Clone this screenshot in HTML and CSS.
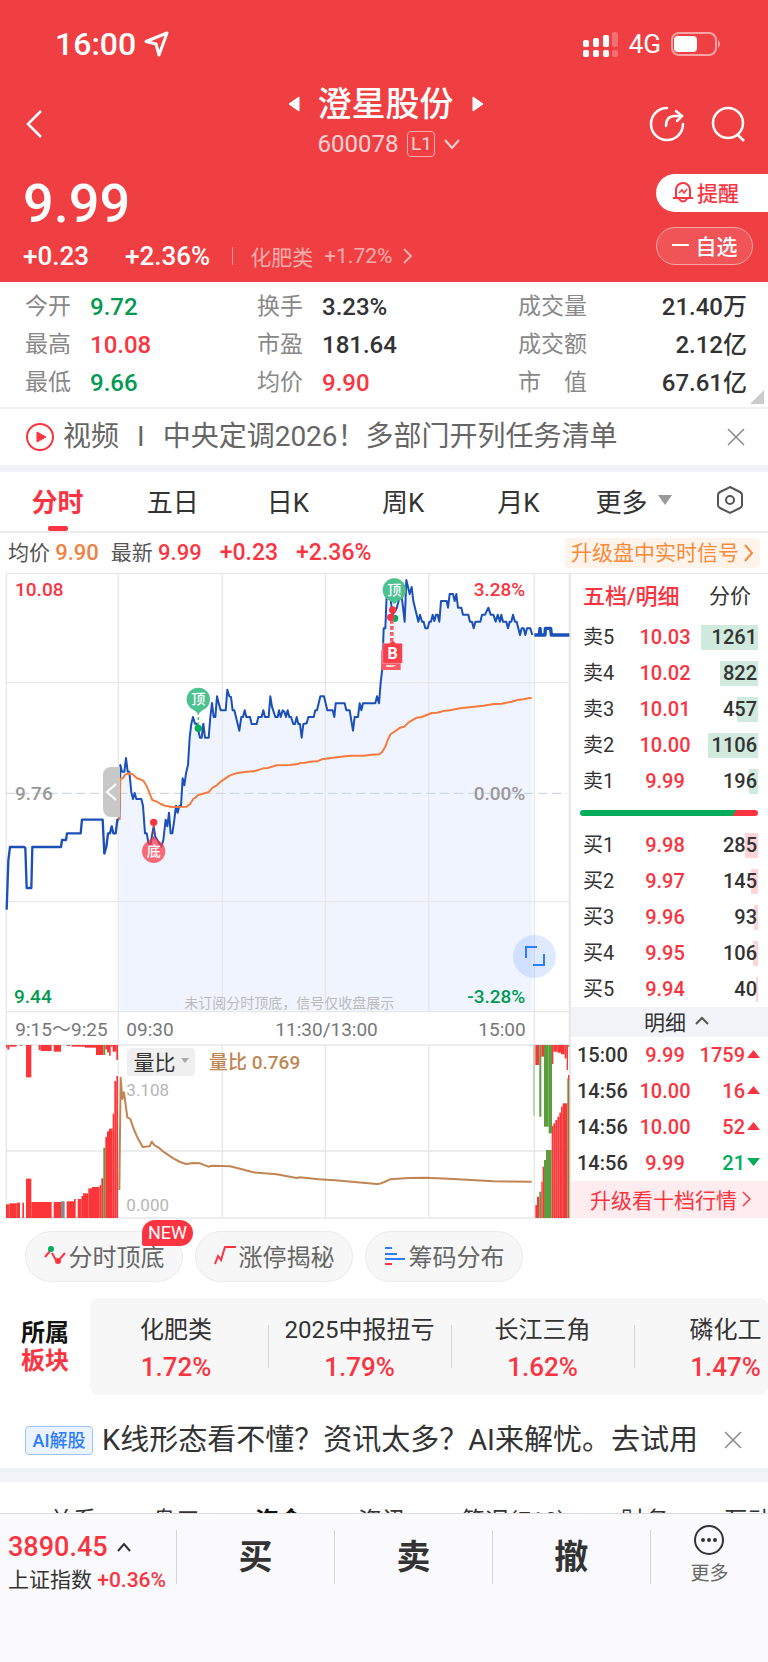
FILE: index.html
```html
<!DOCTYPE html>
<html lang="zh-CN">
<head>
    <meta charset="utf-8">
    <meta name="viewport" content="width=device-width, initial-scale=1">
    <title>澄星股份 600078</title>
    <link rel="stylesheet" href="styles.css">
</head>
<body>
    <header class="header">
        <div class="status">
            <span class="clock">16:00</span>
            <svg class="location" width="26" height="36" viewBox="0 0 26 36"><path d="M23 7L2 15.500l10 2.500 3 11z" fill="none" stroke="#fff" stroke-width="3" stroke-linejoin="round"/></svg>
            <svg class="signal" width="36" height="38" viewBox="0 0 36 38" fill="#fff">
                <rect x="0" y="15" width="6" height="7" rx="2"/><rect x="10" y="13" width="6" height="9" rx="2"/><rect x="20" y="10" width="6" height="12" rx="2"/><rect x="29" y="7" width="6" height="15" rx="2" opacity=".25"/>
                <rect x="0" y="25" width="6" height="7" rx="2"/><rect x="10" y="25" width="6" height="7" rx="2"/><rect x="20" y="25" width="6" height="7" rx="2"/><rect x="29" y="25" width="6" height="7" rx="2" opacity=".25"/>
            </svg>
            <span class="network">4G</span>
            <svg class="battery" width="50" height="24" viewBox="0 0 50 24"><rect x="1" y="1" width="44" height="22" rx="7" fill="none" stroke="#f9a5a6" stroke-width="2"/><rect x="3" y="4" width="23" height="16" rx="4" fill="#fff"/><path d="M47 8q4 4 0 8z" fill="#f9a5a6"/></svg>
        </div>

        <nav class="nav">
            <button class="icon-btn back" aria-label="返回"><svg width="20" height="30" viewBox="0 0 20 30"><path d="M16 2L3 15l13 13" fill="none" stroke="#fff" stroke-width="2.500"/></svg></button>
            <div class="stock">
                <div class="stock-name">
                    <button class="icon-btn" aria-label="上一只"><svg width="12" height="16" viewBox="0 0 12 16"><path d="M11 1v14L1 8z" fill="#fff" stroke="#fff" stroke-linejoin="round"/></svg></button>
                    <h1>澄星股份</h1>
                    <button class="icon-btn" aria-label="下一只"><svg width="12" height="16" viewBox="0 0 12 16"><path d="M1 1v14l10-7z" fill="#fff" stroke="#fff" stroke-linejoin="round"/></svg></button>
                </div>
                <div class="stock-code">
                    <span>600078</span>
                    <span class="level">L1</span>
                    <svg width="16" height="12" viewBox="0 0 16 12"><path d="M1 2l7 8 7-8" fill="none" stroke="#fcd3d3" stroke-width="2"/></svg>
                </div>
            </div>
            <div class="nav-actions">
                <button class="icon-btn" aria-label="分享"><svg width="36" height="36" viewBox="0 0 36 36" fill="none" stroke="#fff" stroke-width="2.500" stroke-linecap="round"><path d="M18 2a16 16 0 1 0 16 16"/><path d="M17 20c0-6 2-10 9-10h5"/><path d="M27 5l6 5-5 5"/></svg></button>
                <button class="icon-btn" aria-label="搜索"><svg width="36" height="36" viewBox="0 0 36 36" fill="none" stroke="#fff" stroke-width="2.500"><circle cx="18" cy="17" r="15"/><path d="M27 28l7 7"/></svg></button>
            </div>
        </nav>

        <div class="quote">
            <div>
                <div class="price">9.99</div>
                <div class="change">
                    <b>+0.23</b><b>+2.36%</b>
                    <a class="industry" href="#">化肥类 <span>+1.72%</span>
                        <svg width="10" height="16" viewBox="0 0 10 16"><path d="M1 1l7 7-7 7" fill="none" stroke="#f9adad" stroke-width="2"/></svg>
                    </a>
                </div>
            </div>
            <div class="quote-actions">
                <button class="remind">
                    <svg width="22" height="22" viewBox="0 0 22 22" fill="none" stroke="#fb3441" stroke-width="2"><path d="M4 17V9a7 7 0 0 1 14 0v8M1 17h20M7 18q4 5 8 0"/><path d="M7 12l3-3 2 3 3-4" stroke-width="1.500"/></svg>提醒
                </button>
                <button class="favorite"><i></i>自选</button>
            </div>
        </div>
    </header>

    <section class="stats">
        <dl>
            <dt>今开</dt><dd class="down">9.72</dd>
            <dt>最高</dt><dd class="up">10.08</dd>
            <dt>最低</dt><dd class="down">9.66</dd>
        </dl>
        <dl>
            <dt>换手</dt><dd>3.23%</dd>
            <dt>市盈</dt><dd>181.64</dd>
            <dt>均价</dt><dd class="up">9.90</dd>
        </dl>
        <dl class="wide">
            <dt>成交量</dt><dd>21.40万</dd>
            <dt>成交额</dt><dd>2.12亿</dd>
            <dt>市　值</dt><dd>67.61亿</dd>
        </dl>
        <svg class="corner" width="14" height="14" viewBox="0 0 14 14"><path d="M14 0v14H0z" fill="#ccc"/></svg>
    </section>

    <div class="news">
        <svg width="28" height="28" viewBox="0 0 28 28"><circle cx="14" cy="14" r="13" fill="none" stroke="#fb3441" stroke-width="2"/><path d="M11 9v10l9-5z" fill="#fb3441" stroke="#fb3441" stroke-linejoin="round"/></svg>
        <a href="#">视频<span class="bar">I</span>中央定调2026！多部门开列任务清单</a>
        <button class="icon-btn" aria-label="关闭"><svg width="18" height="18" viewBox="0 0 18 18"><path d="M1 1l16 16M17 1L1 17" stroke="#888" stroke-width="1.500"/></svg></button>
    </div>

    <nav class="tabs">
        <button class="active">分时</button>
        <button>五日</button>
        <button>日K</button>
        <button>周K</button>
        <button>月K</button>
        <button>更多<svg width="14" height="10" viewBox="0 0 14 10"><path d="M0 0h14L7 10z" fill="#999"/></svg></button>
        <button class="settings" aria-label="设置"><svg width="28" height="30" viewBox="0 0 28 30" fill="none" stroke="#555" stroke-width="2"><path d="M14 2l10 5q2 1 2 3v10q0 2-2 3l-10 5-10-5q-2-1-2-3V10q0-2 2-3z"/><circle cx="14" cy="15" r="4"/></svg></button>
    </nav>

    <div class="summary">
        <span>均价 <b class="avg">9.90</b></span>
        <span>最新 <b class="up">9.99</b></span>
        <b class="up">+0.23</b>
        <b class="up">+2.36%</b>
        <a class="signal-link" href="#">升级盘中实时信号<svg width="10" height="18" viewBox="0 0 10 18"><path d="M1 1l7 8-7 8" fill="none" stroke="#f98a3a" stroke-width="2"/></svg></a>
    </div>

    <main class="market">
        <div class="chart">
            <!-- three units to a pixel -->
            <svg viewBox="0 24 1710 1938">
                <path id="area" fill="#eff4ff"/>
                <path class="grid" d="M18 25H1710M18 353H1710M18 1010H1710M18 1340H1710M18 1440H1710M18 1758H1710M18 1959H1710M19 25V1959M355 25V1959M667 25V1340M976 25V1340M1286 25V1340M667 1440V1959M976 1440V1959M1286 1440V1959M1603 25V1959M1708 25V1959"/>
                <path d="M18 685H1700" stroke="#c3d3df" stroke-width="3" stroke-dasharray="28 14"/>
                <g id="bars"></g>
                <polyline id="auction" class="line" stroke="#1a50b8"/>
                <polyline id="price" class="line" stroke="#1a50b8"/>
                <polyline id="after" class="line" stroke="#1a50b8"/>
                <polyline id="average" class="line" stroke="#f77b3c"/>
                <polyline id="ratio" class="line" stroke="#c08552"/>

                <path d="M595 440V480" stroke="#4dc190" stroke-width="5" stroke-dasharray="9 7"/>
                <circle cx="595" cy="490" r="11" fill="#00ad5b"/>
                <path d="M574 428h42l-21 18z" fill="#4dc190"/><circle cx="595" cy="403" r="35" fill="#4dc190"/>
                <text class="mark" x="595" y="418">顶</text>

                <path d="M461 780V825" stroke="#fb3441" stroke-width="4" stroke-dasharray="10 7"/>
                <circle cx="461" cy="772" r="11" fill="#fb3441"/>
                <g fill="#fb3441" opacity=".72"><path d="M461 815l22 17a35 35 0 1 1-44 0z"/></g>
                <text class="mark" x="461" y="873">底</text>

                <circle cx="1184" cy="160" r="11" fill="#00ad5b"/>
                <path d="M1162 99h42l-21 19z" fill="#4dc190"/><circle cx="1183" cy="75" r="35" fill="#4dc190"/>
                <text class="mark" x="1183" y="90">顶</text>
                <path d="M1178 165V232M1173 165V250" stroke="#f4606a" stroke-width="6" stroke-dasharray="11 7"/>
                <circle cx="1172" cy="157" r="11" fill="#fb3441"/><circle cx="1178" cy="135" r="11" fill="#fb3441"/>
                <path d="M1144 255h58v60h-58z" fill="#f95a66"/>
                <path d="M1148 235h20l10-9 10 9h19v60h-59z" fill="#fb3d4a" stroke="#fff" stroke-width="1"/>
                <text class="mark b" x="1178" y="283">B</text>
                <path d="M1158 301h30q-2 4-12 4h-18z" fill="#fff"/>

                <text class="lbl up" x="45" y="94">10.08</text>
                <text class="lbl end up" x="1576" y="94">3.28%</text>
                <text class="lbl gray" x="45" y="705">9.76</text>
                <text class="lbl end gray" x="1576" y="705">0.00%</text>
                <text class="lbl down" x="42" y="1315">9.44</text>
                <text class="lbl end down" x="1576" y="1315">-3.28%</text>
                <text class="tip" x="553" y="1330">未订阅分时顶底，信号仅收盘展示</text>
                <text class="lbl time" x="46" y="1412">9:15～9:25</text>
                <text class="lbl time" x="379" y="1412">09:30</text>
                <text class="lbl time" x="826" y="1412">11:30/13:00</text>
                <text class="lbl end time" x="1577" y="1412">15:00</text>
                <text class="lbl ratio" x="627" y="1512">量比 0.769</text>
                <text class="lbl light" x="379" y="1593">3.108</text>
                <text class="lbl light" x="379" y="1937">0.000</text>
            </svg>
            <button class="handle" aria-label="收起竞价"><svg width="12" height="18" viewBox="0 0 12 18"><path d="M11 1L2 9l9 8" fill="none" stroke="#fff" stroke-width="2"/></svg></button>
            <button class="expand" aria-label="全屏"><svg width="20" height="20" viewBox="0 0 20 20"><path d="M1 12V1h11M19 8v11H8" fill="none" stroke="#2f7dfb" stroke-width="2"/></svg></button>
            <button class="indicator">量比<svg width="8" height="5" viewBox="0 0 8 5"><path d="M0 0h8L4 5z" fill="#aaa"/></svg></button>
        </div>

        <aside class="book">
            <div class="book-tabs">
                <button class="active">五档/明细</button>
                <button>分价</button>
            </div>
            <table class="levels sell">
                <tr><th>卖5</th><td>10.03</td><td style="--bar: 57px">1261</td></tr>
                <tr><th>卖4</th><td>10.02</td><td style="--bar: 38px">822</td></tr>
                <tr><th>卖3</th><td>10.01</td><td style="--bar: 21px">457</td></tr>
                <tr><th>卖2</th><td>10.00</td><td style="--bar: 50px">1106</td></tr>
                <tr><th>卖1</th><td>9.99</td><td style="--bar: 9px">196</td></tr>
            </table>
            <div class="balance"></div>
            <table class="levels buy">
                <tr><th>买1</th><td>9.98</td><td style="--bar: 13px">285</td></tr>
                <tr><th>买2</th><td>9.97</td><td style="--bar: 7px">145</td></tr>
                <tr><th>买3</th><td>9.96</td><td style="--bar: 4px">93</td></tr>
                <tr><th>买4</th><td>9.95</td><td style="--bar: 5px">106</td></tr>
                <tr><th>买5</th><td>9.94</td><td style="--bar: 2px">40</td></tr>
            </table>
            <button class="detail">明细<svg width="14" height="9" viewBox="0 0 14 9"><path d="M1 8l6-6 6 6" fill="none" stroke="#555" stroke-width="2"/></svg></button>
            <table class="trades">
                <tr><th>15:00</th><td>9.99</td><td>1759<svg width="13" height="8" viewBox="0 0 13 8"><path d="M0 8h13L6.500 0z" fill="#fb3441"/></svg></td></tr>
                <tr><th>14:56</th><td>10.00</td><td>16<svg width="13" height="8" viewBox="0 0 13 8"><path d="M0 8h13L6.500 0z" fill="#fb3441"/></svg></td></tr>
                <tr><th>14:56</th><td>10.00</td><td>52<svg width="13" height="8" viewBox="0 0 13 8"><path d="M0 8h13L6.500 0z" fill="#fb3441"/></svg></td></tr>
                <tr><th>14:56</th><td>9.99</td><td class="down">21<svg width="13" height="8" viewBox="0 0 13 8"><path d="M0 0h13L6.500 8z" fill="#00ad5b"/></svg></td></tr>
            </table>
            <a class="upgrade" href="#">升级看十档行情<svg width="9" height="16" viewBox="0 0 9 16"><path d="M1 1l7 7-7 7" fill="none" stroke="#fb3441" stroke-width="1.500"/></svg></a>
        </aside>
    </main>

    <div class="tools">
        <button><svg width="22" height="22" viewBox="0 0 22 22" fill="none" stroke="#fb3441" stroke-width="2"><path d="M1 12l5-6M8 8l5 9M15 15l6-7"/><circle cx="7" cy="4" r="2" fill="#00ad5b" stroke="#00ad5b"/><circle cx="14" cy="16" r="2" fill="#fb3441"/></svg>分时顶底<span class="new">NEW</span></button>
        <button><svg width="22" height="22" viewBox="0 0 22 22"><path d="M1 19l3-8 3 4L11 2h11" fill="none" stroke="#fb3441" stroke-width="2"/></svg>涨停揭秘</button>
        <button><svg width="22" height="22" viewBox="0 0 22 22" stroke-width="2"><path d="M1 3h7M1 9h12M1 14h20" stroke="#2f7dfb"/><path d="M1 19h7" stroke="#fb3441"/></svg>筹码分布</button>
    </div>

    <section class="sectors">
        <h2>所属<br><span class="up">板块</span></h2>
        <div class="sector-list">
            <a href="#">化肥类<b>1.72%</b></a>
            <a href="#">2025中报扭亏<b>1.79%</b></a>
            <a href="#">长江三角<b>1.62%</b></a>
            <a href="#">磷化工<b>1.47%</b></a>
        </div>
    </section>

    <div class="ai">
        <span class="ai-tag">AI解股</span>
        <a href="#">K线形态看不懂？资讯太多？AI来解忧。去试用</a>
        <button class="icon-btn" aria-label="关闭"><svg width="18" height="18" viewBox="0 0 18 18"><path d="M1 1l16 16M17 1L1 17" stroke="#888" stroke-width="1.500"/></svg></button>
    </div>

    <nav class="subtabs">
        <a href="#">关系</a><a href="#">盘口</a><a class="active" href="#">资金</a><a href="#">资讯</a><a href="#">简况(F10)</a><a href="#">财务</a><a href="#">互动</a>
    </nav>

    <footer class="bottom">
        <div class="index">
            <div class="index-value">3890.45<svg width="14" height="10" viewBox="0 0 14 10"><path d="M1 9l6-7 6 7" fill="none" stroke="#333" stroke-width="2"/></svg></div>
            <div class="index-name">上证指数 <b class="up">+0.36%</b></div>
        </div>
        <button>买</button>
        <button>卖</button>
        <button>撤</button>
        <button class="more"><svg width="32" height="32" viewBox="0 0 32 32"><circle cx="16" cy="16" r="14" fill="none" stroke="#333" stroke-width="2"/><g fill="#333"><circle cx="10" cy="16" r="2"/><circle cx="16" cy="16" r="2"/><circle cx="22" cy="16" r="2"/></g></svg>更多</button>
    </footer>

    <script>
        const auction = "20,1034 25,887 30,846 72,846 76,849 80,969 94,969 97,846 183,846 186,825 198,825 201,805 242,805 246,764 308,764 313,866 319,846 324,805 330,805 335,784 340,805 347,805 352,764 357,764";
        const price = "358,764 361,600 366,620 373,620 378,579 383,620 388,620 394,682 399,702 404,684 409,702 424,702 429,722 435,805 440,805 446,836 452,836 457,805 461,784 466,815 472,825 484,845 490,825 497,764 502,784 507,743 512,805 517,805 523,764 528,722 533,743 538,722 543,722 548,640 553,661 558,625 564,600 569,518 574,476 579,456 585,476 590,476 595,497 600,518 605,518 610,476 615,518 626,518 631,456 636,414 641,456 646,456 651,394 656,414 662,436 677,436 682,374 688,394 693,396 698,436 703,436 708,456 718,497 724,456 729,456 734,436 739,456 750,456 755,477 770,477 775,456 785,456 790,436 795,456 806,456 811,394 816,425 826,456 833,456 837,436 842,456 848,436 853,440 858,456 863,436 868,456 873,456 880,477 885,477 890,456 895,477 900,477 905,518 910,477 920,475 925,456 941,456 946,436 951,436 961,394 972,394 982,436 998,436 1003,456 1007,415 1034,415 1039,436 1049,436 1059,497 1064,456 1074,456 1079,415 1084,436 1089,415 1126,415 1131,394 1137,415 1142,353 1147,310 1151,190 1156,190 1161,66 1166,90 1172,100 1177,150 1190,130 1198,100 1202,85 1207,110 1214,170 1219,45 1224,66 1229,87 1235,66 1240,108 1250,149 1255,170 1260,149 1266,170 1271,170 1276,190 1283,190 1288,170 1293,170 1298,149 1303,168 1308,149 1313,149 1318,170 1323,108 1340,108 1344,128 1349,87 1359,87 1364,108 1369,87 1374,128 1384,128 1389,149 1405,149 1410,170 1416,170 1421,190 1426,170 1441,170 1446,149 1455,149 1465,128 1472,149 1480,149 1487,170 1493,149 1500,170 1504,149 1509,170 1519,170 1524,190 1529,170 1534,170 1539,149 1545,170 1550,170 1555,190 1560,210 1565,190 1571,190 1576,210 1581,190 1591,190 1597,210";
        const after = "1603,210 1618,210 1620,190 1622,210 1635,210 1636,190 1652,190 1654,210 1708,210";
        const average = "358,764 361,641 368,640 375,630 384,625 398,628 410,639 430,647 440,663 450,688 457,705 470,710 482,717 495,722 515,726 560,725 570,717 580,702 597,689 625,682 638,668 650,661 662,650 690,631 708,625 740,620 762,619 790,610 803,609 830,601 868,600 895,597 900,594 915,593 930,590 952,589 965,583 1000,578 1035,574 1055,572 1090,572 1115,569 1138,568 1147,560 1157,543 1163,525 1172,507 1182,501 1200,488 1213,485 1225,473 1250,458 1265,456 1295,444 1312,443 1330,438 1350,436 1380,430 1450,422 1482,417 1505,416 1535,410 1552,405 1570,403 1588,399 1595,399";
        const ratio = "358,1875 362,1538 367,1602 372,1582 382,1657 391,1662 400,1689 412,1717 428,1746 449,1744 455,1730 464,1741 475,1747 490,1760 520,1780 540,1791 558,1797 580,1794 600,1795 625,1805 636,1802 690,1804 720,1811 760,1822 830,1828 890,1839 900,1837 955,1843 1005,1846 1130,1857 1140,1856 1153,1851 1170,1843 1225,1839 1280,1838 1360,1842 1480,1849 1595,1850";

        const RED = "#fb3538", GREEN = "#5c9c3c", GRAY = "#888";

        // [left, right, edge, colour]
        const lower = [
            [18, 28, 1918], [28, 50, 1915], [50, 60, 1913], [67, 72, 1913], [78, 94, 1841], [94, 155, 1911],
            [161, 183, 1911], [183, 194, 1909, GRAY], [200, 222, 1909], [222, 227, 1902], [233, 244, 1902],
            [244, 249, 1893], [249, 265, 1885], [265, 276, 1870], [276, 299, 1866], [299, 304, 1860], [304, 310, 1840],
            [310, 316, 1748, GREEN], [316, 321, 1716], [321, 327, 1699], [327, 338, 1691], [338, 343, 1646],
            [343, 349, 1548], [349, 354, 1533],
            [1606, 1611, 1920], [1611, 1618, 1895], [1618, 1624, 1880, GREEN], [1624, 1628, 1850], [1628, 1632, 1805],
            [1632, 1638, 1785, GREEN], [1638, 1655, 1755, GREEN], [1655, 1660, 1683], [1660, 1666, 1675],
            [1666, 1672, 1665], [1672, 1678, 1655], [1678, 1683, 1643], [1683, 1688, 1625], [1688, 1702, 1615],
            [1702, 1704, 1540, GREEN], [1704, 1708, 1530], [1704, 1706, 1545, GREEN]
        ];
        const upper = [
            [18, 22, 1448], [22, 28, 1454], [28, 50, 1445], [61, 66, 1443], [78, 94, 1537], [116, 122, 1455],
            [122, 155, 1458], [161, 183, 1460], [200, 210, 1443], [215, 255, 1445], [255, 288, 1448], [288, 310, 1470],
            [310, 316, 1470, GREEN], [316, 321, 1453], [321, 327, 1462], [327, 332, 1472], [332, 338, 1445],
            [338, 349, 1460], [349, 354, 1485],
            [1600, 1604, 1652, "#a3c795"], [1606, 1618, 1500], [1618, 1624, 1655, GREEN], [1624, 1632, 1475],
            [1632, 1646, 1685, GREEN], [1646, 1656, 1705, GREEN], [1656, 1660, 1497], [1660, 1672, 1460],
            [1672, 1683, 1463], [1683, 1694, 1468], [1694, 1700, 1480], [1700, 1704, 1515], [1704, 1708, 1445, GREEN]
        ];

        const lines = { auction, price, after, average, ratio };
        for (const id in lines) {
            document.getElementById(id).setAttribute("points", lines[id]);
        }
        document.getElementById("area").setAttribute("d", `M358 1340L${price}V1340Z`);

        function bar(left, right, top, bottom, color) {
            return `<rect x="${left}" y="${top}" width="${right - left}" height="${bottom - top}" fill="${color || RED}"/>`;
        }
        document.getElementById("bars").innerHTML =
            lower.map(b => bar(b[0], b[1], b[2], 1959, b[3])).join("") +
            upper.map(b => bar(b[0], b[1], 1440, b[2], b[3])).join("");
    </script>
</body>
</html>
```

FILE: styles.css
```css
* {
    box-sizing: border-box;
}

body {
    margin: 0;
    font-family: Roboto, "Noto Sans CJK SC", sans-serif;
    font-size: 21px;
    color: #333;
    background: #fff;
    overflow-x: hidden;
}

h1, h2, dl, dd {
    margin: 0;
}

button {
    margin: 0;
    padding: 0;
    border: none;
    background: none;
    font: inherit;
    color: inherit;
    cursor: pointer;
}

a {
    color: inherit;
    text-decoration: none;
}

b {
    font-weight: 500;
}

svg {
    display: block;
    flex: none;
}

.up {
    color: #fb3441;
}

.down {
    color: #009a50;
}

.icon-btn {
    flex: none;
}

/* header */
.header {
    height: 282px;
    color: #fff;
    background: #f03f42;
}

.status {
    display: flex;
    align-items: center;
    height: 84px;
    padding: 4px 47px 0 55px;
}

.clock {
    font-size: 32px;
    font-weight: 500;
}

.location {
    margin-left: 8px;
}

.signal {
    margin-left: auto;
}

.network {
    margin: 0 10px;
    font-size: 26px;
}

.nav {
    display: grid;
    grid-template-columns: 1fr auto 1fr;
    align-items: center;
    height: 76px;
    padding: 0 22px 0 25px;
}

.back {
    justify-self: start;
    padding-top: 4px;
}

.stock {
    display: flex;
    flex-direction: column;
    gap: 8px;
    padding-bottom: 2px;
}

.stock-name, .stock-code {
    display: flex;
    align-items: center;
}

.stock-name {
    gap: 18px;
    height: 38px;
}

.stock-name h1 {
    font-size: 34px;
    font-weight: 500;
    line-height: 36px;
}

.stock-code {
    gap: 9px;
    height: 26px;
    padding-left: 30px;
    font-size: 24px;
    color: #fcd3d3;
}

.level {
    width: 28px;
    border: 1px solid #f9adad;
    border-radius: 4px;
    font-size: 19px;
    line-height: 24px;
    text-align: center;
}

.nav-actions {
    display: flex;
    justify-content: flex-end;
    gap: 25px;
    padding-top: 4px;
}

.quote {
    display: flex;
    justify-content: space-between;
    padding-left: 23px;
}

.price {
    height: 82px;
    font-size: 54px;
    font-weight: 500;
    line-height: 88px;
}

.change {
    display: flex;
    align-items: center;
    gap: 36px;
    height: 28px;
    font-size: 26px;
}

.industry {
    display: flex;
    align-items: center;
    gap: 11px;
    margin-left: -14px;
    padding-left: 18px;
    background: linear-gradient(#f78f90, #f78f90) left center / 1px 18px no-repeat;
    font-size: 21px;
    color: #f9adad;
}

.quote-actions {
    display: flex;
    flex-direction: column;
    gap: 15px;
    width: 112px;
    padding-top: 14px;
}

.remind, .favorite {
    display: flex;
    align-items: center;
    justify-content: center;
    height: 38px;
    padding-bottom: 2px;
    border-radius: 19px;
}

.remind {
    gap: 3px;
    padding-right: 13px;
    border-radius: 19px 0 0 19px;
    color: #fb3441;
    background: #fff;
    font-weight: 500;
}

.favorite {
    gap: 7px;
    width: 97px;
    border: 1px solid #f9a5a6;
    background: #f15457;
    font-weight: 500;
}

.favorite i {
    width: 17px;
    height: 2px;
    background: #fff;
}

/* key figures */
.stats {
    position: relative;
    display: grid;
    grid-template-columns: 232fr 261fr 229fr;
    padding: 6px 21px 5px 25px;
    border-bottom: 2px solid #f1f1f3;
}

.stats dl {
    display: grid;
    grid-template-columns: auto 1fr;
    column-gap: 19px;
    line-height: 38px;
}

.stats dt {
    font-size: 23px;
    color: #888;
}

.stats dd {
    font-size: 24px;
    font-weight: 500;
}

.stats .wide dd {
    text-align: right;
}

.corner {
    position: absolute;
    right: 4px;
    bottom: 3px;
}

.news {
    display: flex;
    align-items: center;
    height: 63px;
    padding: 0 23px 0 26px;
    border-bottom: 7px solid #f2f3f8;
    font-size: 28px;
    color: #666;
}

.news a {
    flex: 1;
    margin-left: 9px;
    line-height: 40px;
}

.news .bar {
    margin: 0 18px;
}

/* period tabs */
.tabs {
    display: grid;
    grid-template-columns: repeat(6, 15fr) 10fr;
    height: 61px;
    border-bottom: 2px solid #ececec;
    font-size: 26px;
}

.tabs button {
    position: relative;
    display: flex;
    align-items: center;
    justify-content: center;
    gap: 10px;
    padding-bottom: 3px;
}

.tabs .active {
    color: #fb3441;
    font-weight: 700;
}

.tabs .active::after {
    content: "";
    position: absolute;
    bottom: 0;
    width: 20px;
    height: 5px;
    border-radius: 2px;
    background: #fb3441;
}

.summary {
    display: flex;
    align-items: center;
    gap: 18px;
    height: 40px;
    padding: 0 8px;
    font-size: 23px;
    line-height: 32px;
}

.summary span {
    font-size: 21px;
    color: #555;
}

.summary span + span {
    margin-left: -6px;
}

.summary span b {
    font-size: 22px;
}

.summary .avg {
    color: #f0813f;
}

.signal-link {
    display: flex;
    align-items: center;
    gap: 5px;
    margin-left: auto;
    padding: 0 6px;
    border-radius: 4px;
    font-size: 21px;
    line-height: 30px;
    color: #f98a3a;
    background: #fff4ec;
}

/* chart */
.market {
    display: flex;
    align-items: flex-start;
}

.chart {
    position: relative;
    flex: 1;
}

.chart > svg {
    width: 100%;
    height: auto;
}

.grid {
    fill: none;
    stroke: #e8e8e8;
    stroke-width: 4;
}

.line {
    fill: none;
    stroke-width: 6;
    stroke-linejoin: round;
}

#auction {
    stroke-width: 7;
}

#after {
    stroke-width: 10;
}

.lbl {
    font-size: 57px;
    font-weight: 500;
    fill: currentColor;
}

.end {
    text-anchor: end;
}

.gray {
    color: #999;
}

.time {
    font-weight: 400;
    color: #777;
}

.ratio {
    color: #c08552;
}

.light {
    font-size: 51px;
    font-weight: 400;
    color: #b5b5b5;
}

.tip {
    font-size: 42px;
    fill: #bbb;
}

.mark {
    font-size: 42px;
    font-weight: 500;
    fill: #fff;
    text-anchor: middle;
}

.mark.b {
    font-size: 48px;
    font-weight: 700;
}

.handle {
    position: absolute;
    top: 30%;
    left: 18%;
    display: flex;
    align-items: center;
    justify-content: center;
    width: 17px;
    height: 50px;
    border-radius: 8px 0 0 8px;
    background: #c8c8c8;
}

.expand {
    position: absolute;
    top: 56%;
    left: 90%;
    display: flex;
    align-items: center;
    justify-content: center;
    width: 43px;
    height: 43px;
    border-radius: 50%;
    background: rgba(47, 125, 251, .16);
}

.indicator {
    position: absolute;
    top: 73%;
    left: 22%;
    display: flex;
    align-items: center;
    justify-content: center;
    gap: 6px;
    width: 68px;
    height: 28px;
    margin: 3px 0 0 2px;
    padding-bottom: 2px;
    border-radius: 4px;
    background: #efefef;
}

/* order book */
.book {
    width: 198px;
    border-top: 1px solid #e8e8e8;
    border-left: 1px solid #e8e8e8;
    font-size: 20px;
}

.book-tabs {
    display: flex;
    justify-content: space-between;
    height: 45px;
    padding: 0 17px 5px 12px;
    font-size: 21px;
}

.book-tabs .active {
    color: #fb3441;
    font-size: 22px;
    font-weight: 500;
}

.levels, .trades {
    table-layout: fixed;
    border-collapse: collapse;
}

.levels {
    width: 175px;
    margin-left: 12px;
}

.trades {
    width: 183px;
    margin-left: 6px;
}

.book tr {
    height: 36px;
}

.book th, .book td {
    padding: 0;
    font-weight: 400;
    line-height: 30px;
    text-align: left;
    white-space: nowrap;
}

.levels th {
    width: 48px;
}

.trades th {
    width: 54px;
    font-weight: 500;
}

.book td {
    font-weight: 500;
}

.book td:nth-child(2) {
    width: 68px;
    text-align: center;
    color: #fb3441;
}

.book td:nth-child(3) {
    text-align: right;
}

.levels td:nth-child(3) {
    padding-right: 1px;
    background: linear-gradient(#d0eadd, #d0eadd) right center / var(--bar) 25px no-repeat;
}

.levels.buy td:nth-child(3) {
    background-image: linear-gradient(#fdd5d9, #fdd5d9);
}

.trades td:nth-child(3) {
    color: #fb3441;
}

.trades td.down:nth-child(3) {
    color: #00ad5b;
}

.trades svg {
    display: inline-block;
    margin-left: 2px;
    vertical-align: 4px;
}

.balance {
    height: 6px;
    margin: 11px 10px 11px 9px;
    border-radius: 3px;
    background: linear-gradient(120deg, #00ad5b 86%, #fb3441 86%);
}

.detail {
    display: flex;
    align-items: center;
    justify-content: center;
    gap: 9px;
    width: 100%;
    height: 30px;
    padding: 0 0 3px 14px;
    background: #f2f3f8;
    font-size: 21px;
}

.upgrade {
    display: flex;
    align-items: center;
    justify-content: center;
    gap: 5px;
    height: 37px;
    padding: 0 0 2px 2px;
    background: #feecee;
    font-size: 21px;
    color: #fb3441;
}

/* tools under the chart */
.tools {
    display: flex;
    gap: 12px;
    padding: 12px 25px 16px;
}

.tools button {
    position: relative;
    display: flex;
    align-items: center;
    justify-content: center;
    gap: 3px;
    width: 158px;
    height: 51px;
    padding-bottom: 2px;
    border: 1px solid #ebebeb;
    border-radius: 26px;
    background: #f7f7f7;
    font-size: 24px;
    color: #666;
}

.new {
    position: absolute;
    top: -12px;
    right: -11px;
    padding: 0 6px;
    border-radius: 13px 13px 13px 2px;
    background: #fb3441;
    font-size: 18px;
    line-height: 26px;
    color: #fff;
}

.sectors {
    display: flex;
    align-items: center;
}

.sectors h2 {
    width: 90px;
    padding-left: 21px;
    font-size: 24px;
    font-weight: 700;
    line-height: 28px;
    color: #111;
}

.sectors .up {
    color: #fb3441;
}

.sector-list {
    display: flex;
    flex: 1;
    height: 97px;
    border-radius: 8px;
    background: #f7f7f7;
    overflow: hidden;
}

.sector-list a {
    flex: none;
    width: 183px;
    padding-top: 14px;
    background: linear-gradient(#d5d5d5, #d5d5d5) left center / 1px 43px no-repeat;
    font-size: 24px;
    line-height: 37px;
    text-align: center;
    white-space: nowrap;
}

.sector-list a:first-child {
    width: 178px;
    padding-right: 6px;
    background: none;
}

.sector-list b {
    display: block;
    font-size: 26px;
    color: #fb3441;
}

.ai {
    display: flex;
    align-items: center;
    height: 87px;
    padding: 17px 26px 0 25px;
    border-bottom: 14px solid #f2f3f8;
}

.ai-tag {
    width: 68px;
    border: 1px solid #9cc3fd;
    border-radius: 4px;
    background: #eaf3ff;
    font-size: 18px;
    font-weight: 500;
    line-height: 27px;
    text-align: center;
    color: #2f7dfb;
}

.ai a {
    flex: 1;
    margin-left: 9px;
    font-size: 29px;
    line-height: 40px;
    white-space: nowrap;
}

/* the lower tabs run under the trading bar */
.subtabs {
    display: flex;
    gap: 55px;
    height: 31px;
    padding: 20px 0 0 49px;
    overflow: hidden;
    font-size: 24px;
    line-height: 38px;
    white-space: nowrap;
}

.subtabs .active {
    font-weight: 700;
    color: #111;
}

/* trading bar */
.bottom {
    display: flex;
    height: 149px;
    padding-top: 16px;
    border-top: 1px solid #dcdce0;
    background: #fafafc;
}

.index {
    width: 176px;
    padding-left: 8px;
}

.index-value {
    display: flex;
    align-items: center;
    gap: 9px;
    font-size: 27px;
    font-weight: 500;
    line-height: 34px;
    color: #fb3441;
}

.index-name {
    font-size: 21px;
    line-height: 32px;
    white-space: nowrap;
}

.bottom button {
    flex: 158;
    height: 54px;
    padding-bottom: 6px;
    border-left: 1px solid #d5d5d8;
    font-size: 34px;
    font-weight: 700;
}

.bottom .more {
    flex: 118;
    display: flex;
    flex-direction: column;
    align-items: center;
    justify-content: flex-end;
    gap: 8px;
    padding-bottom: 0;
    font-size: 19px;
    font-weight: 400;
    line-height: 20px;
    color: #666;
}
```
